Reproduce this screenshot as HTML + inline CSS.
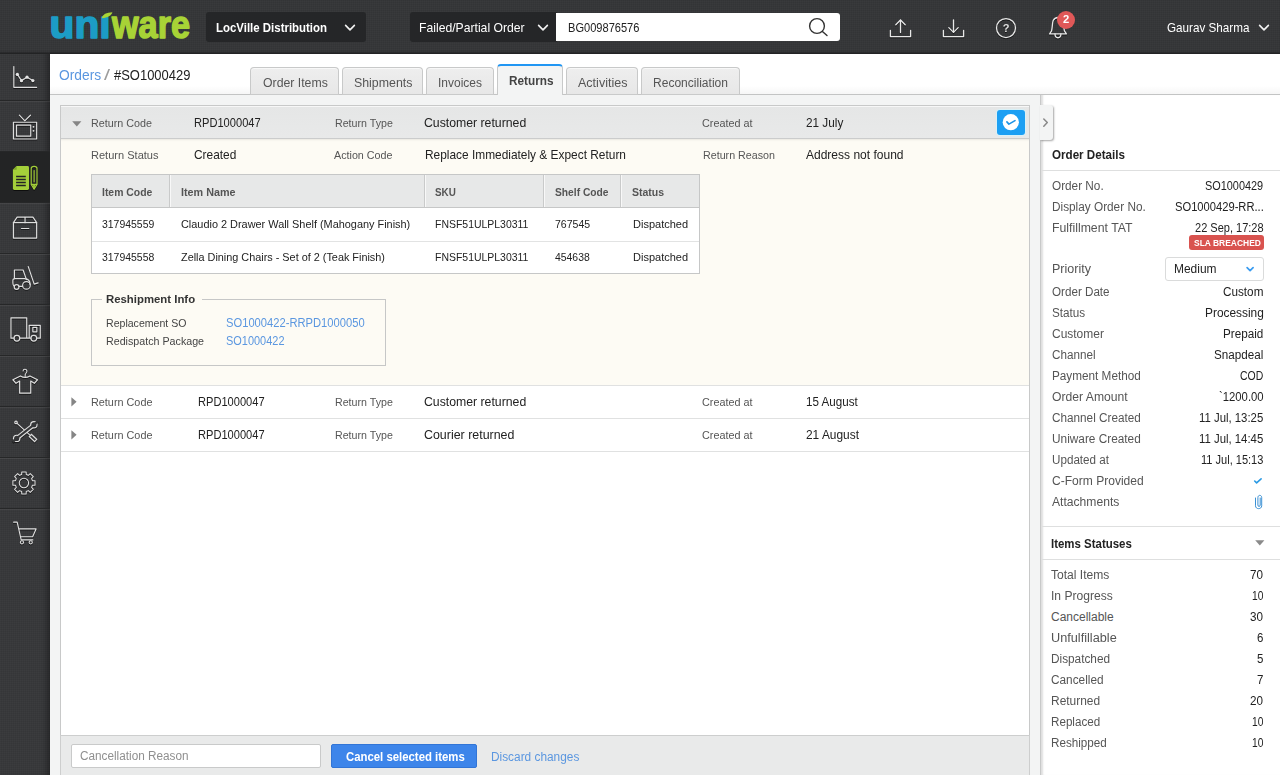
<!DOCTYPE html>
<html lang="en">
<head>
<meta charset="utf-8">
<title>Uniware - Order #SO1000429 - Returns</title>
<style>
*{box-sizing:border-box;margin:0;padding:0}
html,body{width:1280px;height:775px;overflow:hidden}
body{font-family:"Liberation Sans",sans-serif;font-size:12px;color:#222;background:#fff;position:relative}
.abs{position:absolute}
a{color:inherit;text-decoration:none}
.t{position:absolute;white-space:nowrap;line-height:16px;transform-origin:0 50%;color:#222}
.g{position:absolute;left:0;top:0}

/* dark chrome */
.dark{background-color:#353638;
 background-image:
  repeating-linear-gradient(0deg,rgba(255,255,255,.012) 0 1px,rgba(0,0,0,.02) 1px 2px),
  repeating-linear-gradient(90deg,rgba(255,255,255,.012) 0 1px,rgba(0,0,0,.02) 1px 2px);}
#topbar{z-index:5;position:absolute;left:0;top:0;width:1280px;height:54px;box-shadow:inset 0 -1px 0 #222324,inset 0 -3px 2px -1px rgba(0,0,0,.25)}
#sidebar{background-color:#37383a !important;position:absolute;left:0;top:50px;width:50px;height:725px;box-shadow:inset -7px 0 6px -4px rgba(0,0,0,.35)}
.sitem{position:absolute;left:0;width:50px;height:51px;border-bottom:1px solid #262728;box-shadow:inset 0 1px 0 rgba(255,255,255,.07)}
.sitem.active{background:#232425;box-shadow:none}
.sitem.active svg{transform:none}
.sitem svg{position:absolute;left:0;top:0;width:50px;height:50px;transform:scale(.955);transform-origin:25px 27px;fill:none;stroke:#dedede;stroke-width:1.25;stroke-linecap:round;stroke-linejoin:round;filter:drop-shadow(0 1px 0 rgba(0,0,0,.6))}
.sitem:last-child{border-bottom:none}

/* top bar */
.tb-box{position:absolute;top:12px;height:30px;background:#252628;border-radius:3px}
#wh{left:206px;width:160px}
#stype{left:410px;width:147px;border-radius:3px 0 0 3px}
#sinput{position:absolute;left:556px;top:12.5px;width:284px;height:28.3px;background:#fff;border-radius:0 3px 3px 0}
.chev{position:absolute;fill:none;stroke:#f2f2f2;stroke-width:1.6;stroke-linecap:round;stroke-linejoin:round}
.tbi{position:absolute;fill:none;stroke:#e8e8e8;stroke-width:1.3;stroke-linecap:round;stroke-linejoin:round;filter:drop-shadow(0 1px 0 rgba(0,0,0,.6))}
#badge{position:absolute;left:1057px;top:10.5px;width:18px;height:18px;border-radius:9px;background:#e05858}

/* main header */
#mainhead{position:absolute;left:50px;top:54px;width:1230px;height:41px;background:linear-gradient(#fff 0,#fff 80%,#f6f6f6 100%);border-bottom:1px solid #c3c4c4}
.tab{position:absolute;top:67px;height:28px;background:linear-gradient(#eeeeee,#e7e7e7);border:1px solid #c8c9c9;border-bottom-color:#c9caca;border-radius:4px 4px 0 0;box-shadow:inset 0 1px 0 #f8f8f8}
.tab.active{top:64px;height:32px;background:#f3f4f4;border-top:2px solid #2196f3;border-bottom:none;box-shadow:none}

/* content */
#content{position:absolute;left:50px;top:95px;width:990px;height:680px;background:#f3f4f4}
#acc{position:absolute;left:60px;top:105px;width:970px;height:631px;background:#fff;border:1px solid #c8c9c9}
#footer{position:absolute;left:60px;top:735px;width:970px;height:40px;background:#e9eaea;border:1px solid #cdcece;border-bottom:none}
.row{position:absolute;left:61px;width:968px}
.row.head{top:106px;height:33px;background:linear-gradient(#e5e6e6,#e8e9e9);border-bottom:1px solid #cbcccc;box-shadow:inset 0 1px 0 #f7f7f7}
.row.plain{height:33px;border-bottom:1px solid #e0e1e1;background:#fff}
#expanded{position:absolute;left:61px;top:139px;width:968px;height:247px;background:#fdfbf4;box-shadow:inset 0 3px 2px -2px rgba(0,0,0,.08);border-bottom:1px solid #e0e1e1}
.tri{position:absolute;width:0;height:0}
.tri.down{border-left:4.6px solid transparent;border-right:4.6px solid transparent;border-top:5.2px solid #858585}
.tri.right{border-top:4.6px solid transparent;border-bottom:4.6px solid transparent;border-left:5.4px solid #858585}

/* item table */
#tbl{position:absolute;left:91px;top:174px;width:609px;height:100px;border:1px solid #c6c7c7;background:#fff}
#tbl .th{position:absolute;top:0;height:33px;background:#e7e8e8;border-bottom:1px solid #c6c7c7}
#tbl .vs{position:absolute;top:0;width:2px;height:32px;background:#c9caca;border-right:1px solid #f8f8f8}
#tbl .hr{position:absolute;left:0;width:607px;height:1px;background:#e2e3e3}
#reship{position:absolute;left:91px;top:299px;width:295px;height:67px;border:1px solid #c6c7c7}
#reship .lg{position:absolute;left:10px;top:-8px;width:100px;height:16px;background:#fdfbf4}

/* footer */
#creason{position:absolute;left:71px;top:744px;width:250px;height:24px;background:#fff;border:1px solid #c9caca;border-radius:2px}
#cbtn{position:absolute;left:331px;top:744px;width:146px;height:24px;background:#3d85ea;border:1px solid #3275d6;border-radius:2px}

/* right panel */
#rp{position:absolute;left:1040px;top:95px;width:240px;height:680px;background:#fff;border-left:1px solid #c8c9c9;box-shadow:inset 3px 0 2px -1px rgba(0,0,0,.13)}
#handle{position:absolute;left:1040px;top:105px;width:13px;height:35px;background:#f3f4f4;border-radius:0 3px 3px 0;box-shadow:1px 1px 2px rgba(0,0,0,.35)}
.hline{position:absolute;left:1042px;width:238px;height:1px;background:#dedfdf}
#sla{position:absolute;left:1189px;top:235px;width:75px;height:15px;background:#d9534f;border-radius:3px}
#prio{position:absolute;left:1165px;top:256.6px;width:99px;height:24px;background:#fff;border:1px solid #dadbdb;border-radius:3px}
#chk{position:absolute;left:997px;top:110px;width:28px;height:25px;background:#1c9ff3;border-radius:3px;box-shadow:0 0 1px 1px rgba(210,245,255,.7)}
</style>
</head>
<body>

<!-- ============ TOP BAR ============ -->
<div id="topbar" class="dark">
  <svg class="abs" style="left:44px;top:6px" width="156" height="42" viewBox="44 6 156 42" aria-label="uniware">
    
    <text x="49.6" y="38" font-family="Liberation Sans, sans-serif" font-weight="bold" font-size="38" fill="#1c9cc5" stroke="#1c9cc5" stroke-width="1.5" stroke-linejoin="round" textLength="61" lengthAdjust="spacingAndGlyphs">un&#305;</text>
    <text x="111.9" y="38" font-family="Liberation Sans, sans-serif" font-weight="bold" font-size="38" fill="#a8d336" stroke="#a8d336" stroke-width="1.5" stroke-linejoin="round" textLength="78.2" lengthAdjust="spacingAndGlyphs">ware</text>
    <path d="M101.8 18.2 C102.5 14.2 106.5 12.4 112.4 12.2 C111.4 15.6 108 17.6 101.8 18.2 Z" fill="#a9d435"/>
  </svg>
  <div class="tb-box" id="wh"></div>
  <span class="t" style="left:215.9px;top:19.5px;font-size:13px;font-weight:700;color:#fff;transform:scaleX(0.880);">LocVille Distribution</span>
  <svg class="chev" style="left:343px;top:23px" width="14" height="10" viewBox="0 0 14 10"><path d="M2.6 2.4 L7 6.9 L11.4 2.4"/></svg>
  <div class="tb-box" id="stype"></div>
  <span class="t" style="left:418.8px;top:19.5px;font-size:13px;color:#fff;transform:scaleX(0.937);">Failed/Partial Order</span>
  <svg class="chev" style="left:536px;top:23px" width="14" height="10" viewBox="0 0 14 10"><path d="M2.6 2.4 L7 6.9 L11.4 2.4"/></svg>
  <div id="sinput"></div>
  <span class="t" style="left:568.1px;top:19.5px;font-size:13px;color:#222;transform:scaleX(0.852);">BG009876576</span>
  <svg class="abs" style="left:806px;top:15px;fill:none;stroke:#333;stroke-width:1.4;stroke-linecap:round" width="24" height="24" viewBox="0 0 24 24"><circle cx="11" cy="11" r="7.4"/><path d="M16.4 16.4 L21 20.6"/></svg>
  <svg class="tbi" style="left:888px;top:17px" width="26" height="22" viewBox="0 0 26 22"><path d="M2.4 13.5 V19.6 H22.6 V13.5"/><path d="M12.5 15.5 V3.2"/><path d="M7.8 7.8 L12.5 3 L17.2 7.8"/></svg>
  <svg class="tbi" style="left:941px;top:17px" width="26" height="22" viewBox="0 0 26 22"><path d="M2.4 13.5 V19.6 H22.6 V13.5"/><path d="M12.5 3 V15.2"/><path d="M7.8 10.6 L12.5 15.4 L17.2 10.6"/></svg>
  <svg class="tbi" style="left:994px;top:16px" width="24" height="24" viewBox="0 0 24 24"><circle cx="12" cy="12.05" r="9.5"/><text x="12" y="16.1" text-anchor="middle" font-family="Liberation Sans, sans-serif" font-size="11" font-weight="bold" fill="#e0e0e0" stroke="none">?</text></svg>
  <svg class="tbi" style="left:1046px;top:14px" width="24" height="26" viewBox="0 0 24 26"><path d="M3.6 19.9 L5.6 16.8 C6.5 13 6.2 9 7.2 6.6 C8.2 4.3 10 3.5 12 3.5 C14 3.5 15.8 4.3 16.8 6.6 C17.8 9 17.5 13 18.4 16.8 L20.4 19.9 Z"/><path d="M9 20 C9 25 14.9 25 14.9 20"/></svg>
  <div id="badge"></div>
  <span class="t" style="left:1063.2px;top:11.8px;font-size:10px;font-weight:700;color:#fff;transform:scaleX(1.124);">2</span>
  <span class="t" style="left:1167.2px;top:19.5px;font-size:13px;color:#fff;transform:scaleX(0.898);">Gaurav Sharma</span>
  <svg class="chev" style="left:1257px;top:23px" width="14" height="10" viewBox="0 0 14 10"><path d="M2.6 2.4 L7 6.9 L11.4 2.4"/></svg>
</div>

<!-- ============ SIDEBAR ============ -->
<div id="sidebar" class="dark">
  <div class="sitem" style="top:0px"><svg viewBox="0 50 50 50"><path d="M13.3 66 V87.8 H37.2"/><path d="M17 74.3 L21.3 80.8 L27.1 77.2 L33.2 80.7"/><g fill="#e4e4e4" stroke="none"><circle cx="17" cy="74.3" r="1.7"/><circle cx="21.3" cy="80.8" r="1.7"/><circle cx="27.1" cy="77.2" r="1.7"/><circle cx="33.2" cy="80.7" r="1.7"/></g></svg></div>
  <div class="sitem" style="top:51px"><svg viewBox="0 101 50 50"><path d="M19.1 114.6 L24.8 120.5 L30.7 114.6"/><rect x="12.9" y="122" width="24.3" height="17.5"/><rect x="16.1" y="125" width="14.9" height="11.6"/><g fill="#e4e4e4" stroke="none"><circle cx="33.9" cy="126.8" r="1"/><circle cx="33.9" cy="131" r="1"/></g></svg></div>
  <div class="sitem active" style="top:102px"><svg viewBox="0 152 50 50"><g style="filter:none"><path d="M16.6 166 H27.6 Q29 166 29 167.4 V188.6 Q29 190 27.6 190 H14.3 Q12.9 190 12.9 188.6 V169.7 Z" fill="#a4cf3a" stroke="none"/><path d="M12.9 169.7 H16.6 V166 Z" fill="#7fa52a" stroke="none"/><path d="M16.1 176.5 H25.8 M16.1 179.5 H25.8 M16.1 182.6 H25.8 M16.1 185.6 H25.8" stroke="#232425" stroke-width="1.5" stroke-linecap="butt"/><path d="M31.2 168.4 V184.4 L34.1 189.3 L37 184.4 V168.4 Q37 166.3 34.1 166.3 Q31.2 166.3 31.2 168.4 Z M31.2 184.4 H37 M34.1 170.5 V182" stroke="#a4cf3a" stroke-width="1.2"/><path d="M33 184.6 L34.1 189 L35.2 184.6" stroke="#a4cf3a" fill="#a4cf3a" stroke-width=".8"/></g></svg></div>
  <div class="sitem" style="top:153px"><svg viewBox="0 203 50 50"><rect x="12.9" y="222.3" width="24.3" height="16.2"/><path d="M12.9 222.3 L16.8 216.5 H33.3 L37.2 222.3 M25.05 216.5 V222.3 M21.3 228.4 H29"/></svg></div>
  <div class="sitem" style="top:204px"><svg viewBox="0 254 50 50"><path d="M13.9 278.5 V269.5 H23 L26.5 279.6"/><path d="M13.7 286.6 Q12.3 285.6 12.3 283 V280.6 Q12.3 278.5 14.6 278.5 H24.5 Q30.3 279 30.4 284.6 M18.7 286.6 H22.5"/><circle cx="16.2" cy="287.2" r="2.5"/><circle cx="26.5" cy="285.6" r="4"/><path d="M28.4 265.9 L34.6 284.3 L38.7 283"/></svg></div>
  <div class="sitem" style="top:255px"><svg viewBox="0 305 50 50"><path d="M13.5 338.5 H10.3 V317.2 H26.8 V338.5 H19.5 M26.8 338.5 H29.4 M31.2 338.5 H29.4 V325 H41 V338.5 H37.2"/><rect x="33.2" y="327.2" width="4.2" height="4.6"/><circle cx="16.5" cy="338.5" r="3"/><circle cx="34.2" cy="338.5" r="3"/></svg></div>
  <div class="sitem" style="top:306px"><svg viewBox="0 356 50 50"><path d="M19.4 393.7 V381 L15.6 383.3 L12.3 379.6 L20.2 375.6 Q25.2 378.6 30.2 375.6 L38.1 379.6 L34.8 383.3 L31 381 V393.7 Z"/><path d="M25.2 376.3 V374.4 C25.2 372.9 27 372.6 27 370.8 C27 369.3 25.9 368.7 24.9 368.7 C23.8 368.7 23 369.5 23 370.5" stroke-width="1.1"/></svg></div>
  <div class="sitem" style="top:357px"><svg viewBox="0 407 50 50"><path d="M16.4 422.6 L30.5 435.5" stroke-width="1.2"/><circle cx="15.6" cy="421.9" r="1.3"/><path d="M30.2 435.2 L36.6 441.2" stroke-width="4.4" stroke-linecap="butt"/><path d="M31 436 L35.8 440.4" stroke="#353638" stroke-width="2" stroke-linecap="butt"/><path d="M17.5 437.6 L33.5 425" stroke-width="4.6" stroke-linecap="butt"/><circle cx="16.3" cy="438.6" r="3.9" fill="#e4e4e4" stroke="none"/><circle cx="34.3" cy="424.3" r="3.9" fill="#e4e4e4" stroke="none"/><path d="M17.5 437.6 L33.5 425" stroke="#353638" stroke-width="2.2" stroke-linecap="butt"/><circle cx="16.3" cy="438.6" r="2.7" fill="#353638" stroke="none"/><circle cx="34.3" cy="424.3" r="2.7" fill="#353638" stroke="none"/><path d="M16.6 438.4 L12 442.2" stroke="#353638" stroke-width="2.6" stroke-linecap="butt"/><path d="M34 424.5 L38.8 420.5" stroke="#353638" stroke-width="2.6" stroke-linecap="butt"/></svg></div>
  <div class="sitem" style="top:408px"><svg viewBox="0 458 50 50"><path d="M32.8 480.5 L35.5 480.6 L35.5 485.2 L32.8 485.3 L31.9 487.5 L33.7 489.5 L30.5 492.7 L28.5 490.9 L26.3 491.8 L26.2 494.5 L21.6 494.5 L21.5 491.8 L19.3 490.9 L17.3 492.7 L14.1 489.5 L15.9 487.5 L15.0 485.3 L12.3 485.2 L12.3 480.6 L15.0 480.5 L15.9 478.3 L14.1 476.3 L17.3 473.1 L19.3 474.9 L21.5 474.0 L21.6 471.3 L26.2 471.3 L26.3 474.0 L28.5 474.9 L30.5 473.1 L33.7 476.3 L31.9 478.3 Z" stroke-width="1.1"/><circle cx="23.9" cy="482.9" r="4.9" stroke-width="1.1"/></svg></div>
  <div class="sitem" style="top:459px"><svg viewBox="0 509 50 50"><path d="M13.1 521.5 H16.8 L21 540.1 H33.2 M18.5 528.6 H36.6 L33 536.8 H20.3" stroke-width="1.2"/><circle cx="21.8" cy="542.6" r="1.7" stroke-width="1.1"/><circle cx="31" cy="542.6" r="1.7" stroke-width="1.1"/></svg></div>
</div>

<!-- ============ MAIN HEADER / TABS ============ -->
<div id="mainhead"></div>
<div class="g" id="crumb">
  <span class="t" style="left:58.8px;top:67.2px;font-size:14px;color:#5b97e0;transform:scaleX(0.987);"><a>Orders</a></span>
  <span class="t" style="left:103.7px;top:67.2px;font-size:14px;color:#9c9c9c;transform:scaleX(1.555);">/</span>
  <span class="t" style="left:114.1px;top:67.2px;font-size:14px;color:#222;transform:scaleX(0.926);">#SO1000429</span>
</div>
<div class="g" id="tabs">
  <div class="tab" style="left:250px;width:89px"></div><span class="t" style="left:263.0px;top:74.9px;font-size:12.5px;color:#555;transform:scaleX(0.982);">Order Items</span>
  <div class="tab" style="left:342px;width:81px"></div><span class="t" style="left:353.6px;top:74.9px;font-size:12.5px;color:#555;transform:scaleX(0.989);">Shipments</span>
  <div class="tab" style="left:426px;width:68px"></div><span class="t" style="left:438.1px;top:74.9px;font-size:12.5px;color:#555;transform:scaleX(0.958);">Invoices</span>
  <div class="tab active" style="left:497px;width:66px"></div><span class="t" style="left:509.1px;top:72.6px;font-size:12.5px;font-weight:700;color:#444;transform:scaleX(0.941);">Returns</span>
  <div class="tab" style="left:566px;width:72px"></div><span class="t" style="left:577.6px;top:74.9px;font-size:12.5px;color:#555;transform:scaleX(1.002);">Activities</span>
  <div class="tab" style="left:641px;width:99px"></div><span class="t" style="left:653.1px;top:74.9px;font-size:12.5px;color:#555;transform:scaleX(0.963);">Reconciliation</span>
</div>

<!-- ============ CONTENT: RETURNS ACCORDION ============ -->
<div id="content"></div>
<div id="acc"></div>

<div class="g" id="ret1">
  <div class="row head"></div>
  <svg class="abs" style="left:71.5px;top:120.9px" width="10" height="6" viewBox="0 0 10 6"><polygon points="0.2,0.2 9.4,0.2 4.8,5.4" fill="#858585"/></svg>
  <span class="t" style="left:91.0px;top:115.3px;font-size:11px;color:#555;transform:scaleX(0.978);">Return Code</span>
  <span class="t" style="left:193.7px;top:114.7px;font-size:13px;color:#222;transform:scaleX(0.854);">RPD1000047</span>
  <span class="t" style="left:335.1px;top:115.3px;font-size:11px;color:#555;transform:scaleX(0.968);">Return Type</span>
  <span class="t" style="left:423.8px;top:114.7px;font-size:13px;color:#222;transform:scaleX(0.943);">Customer returned</span>
  <span class="t" style="left:702.3px;top:115.3px;font-size:11px;color:#555;transform:scaleX(0.983);">Created at</span>
  <span class="t" style="left:805.6px;top:114.7px;font-size:13px;color:#222;transform:scaleX(0.905);">21 July</span>
  <div id="chk"><svg width="28" height="25" viewBox="0 0 28 25"><circle cx="13.8" cy="12.2" r="8.1" fill="#fff"/><path d="M9.9 11.9 L11.9 14.1 L18 10.6" fill="none" stroke="#1b93e6" stroke-width="1.6" stroke-linecap="round" stroke-linejoin="round"/></svg></div>

  <div id="expanded"></div>
  <span class="t" style="left:91.0px;top:147.3px;font-size:11px;color:#555;transform:scaleX(1.004);">Return Status</span>
  <span class="t" style="left:193.7px;top:146.7px;font-size:13px;color:#222;transform:scaleX(0.914);">Created</span>
  <span class="t" style="left:333.9px;top:147.3px;font-size:11px;color:#555;transform:scaleX(0.976);">Action Code</span>
  <span class="t" style="left:425.0px;top:146.7px;font-size:13px;color:#222;transform:scaleX(0.915);">Replace Immediately &amp; Expect Return</span>
  <span class="t" style="left:702.8px;top:147.3px;font-size:11px;color:#555;transform:scaleX(0.973);">Return Reason</span>
  <span class="t" style="left:806.2px;top:146.7px;font-size:13px;color:#222;transform:scaleX(0.924);">Address not found</span>

  <div id="tbl">
    <div class="th" style="left:0;width:607px"></div>
    <div class="vs" style="left:77px"></div>
    <div class="vs" style="left:332px"></div>
    <div class="vs" style="left:451px"></div>
    <div class="vs" style="left:528px"></div>
    <div class="hr" style="top:66px"></div>
  </div>
  <span class="t" style="left:101.6px;top:184.4px;font-size:11px;font-weight:700;color:#555;transform:scaleX(0.946);">Item Code</span>
  <span class="t" style="left:180.9px;top:184.4px;font-size:11px;font-weight:700;color:#555;transform:scaleX(0.980);">Item Name</span>
  <span class="t" style="left:435.1px;top:184.4px;font-size:11px;font-weight:700;color:#555;transform:scaleX(0.896);">SKU</span>
  <span class="t" style="left:554.7px;top:184.4px;font-size:11px;font-weight:700;color:#555;transform:scaleX(0.932);">Shelf Code</span>
  <span class="t" style="left:631.6px;top:184.4px;font-size:11px;font-weight:700;color:#555;transform:scaleX(0.955);">Status</span>

  <span class="t" style="left:102.1px;top:216.4px;font-size:11px;color:#222;transform:scaleX(0.950);">317945559</span>
  <span class="t" style="left:180.9px;top:216.4px;font-size:11px;color:#222;transform:scaleX(0.991);">Claudio 2 Drawer Wall Shelf (Mahogany Finish)</span>
  <span class="t" style="left:435.1px;top:216.4px;font-size:11px;color:#222;transform:scaleX(0.951);">FNSF51ULPL30311</span>
  <span class="t" style="left:555.1px;top:216.4px;font-size:11px;color:#222;transform:scaleX(0.957);">767545</span>
  <span class="t" style="left:632.8px;top:216.4px;font-size:11px;color:#222;transform:scaleX(1.001);">Dispatched</span>

  <span class="t" style="left:102.1px;top:249.4px;font-size:11px;color:#222;transform:scaleX(0.950);">317945558</span>
  <span class="t" style="left:180.9px;top:249.4px;font-size:11px;color:#222;transform:scaleX(0.987);">Zella Dining Chairs - Set of 2 (Teak Finish)</span>
  <span class="t" style="left:435.1px;top:249.4px;font-size:11px;color:#222;transform:scaleX(0.951);">FNSF51ULPL30311</span>
  <span class="t" style="left:555.1px;top:249.4px;font-size:11px;color:#222;transform:scaleX(0.946);">454638</span>
  <span class="t" style="left:632.8px;top:249.4px;font-size:11px;color:#222;transform:scaleX(1.001);">Dispatched</span>

  <div id="reship"><div class="lg"></div></div>
  <span class="t" style="left:105.8px;top:291.4px;font-size:11px;font-weight:700;color:#333;transform:scaleX(1.034);">Reshipment Info</span>
  <span class="t" style="left:105.8px;top:315.0px;font-size:11px;color:#444;transform:scaleX(0.961);">Replacement SO</span>
  <span class="t" style="left:226.4px;top:315.0px;font-size:12px;color:#5b97e0;transform:scaleX(0.932);"><a>SO1000422-RRPD1000050</a></span>
  <span class="t" style="left:105.8px;top:333.4px;font-size:11px;color:#444;transform:scaleX(0.972);">Redispatch Package</span>
  <span class="t" style="left:226.4px;top:333.4px;font-size:12px;color:#5b97e0;transform:scaleX(0.913);"><a>SO1000422</a></span>
</div>

<div class="g" id="ret2">
  <div class="row plain" style="top:386px"></div>
  <svg class="abs" style="left:70.5px;top:397.2px" width="6" height="10" viewBox="0 0 6 10"><polygon points="0.4,0.2 5.6,4.8 0.4,9.4" fill="#858585"/></svg>
  <span class="t" style="left:90.6px;top:394.3px;font-size:11px;color:#555;transform:scaleX(0.985);">Return Code</span>
  <span class="t" style="left:197.9px;top:393.7px;font-size:13px;color:#222;transform:scaleX(0.853);">RPD1000047</span>
  <span class="t" style="left:335.1px;top:394.3px;font-size:11px;color:#555;transform:scaleX(0.968);">Return Type</span>
  <span class="t" style="left:423.8px;top:393.7px;font-size:13px;color:#222;transform:scaleX(0.943);">Customer returned</span>
  <span class="t" style="left:702.3px;top:394.3px;font-size:11px;color:#555;transform:scaleX(0.983);">Created at</span>
  <span class="t" style="left:806.1px;top:393.7px;font-size:13px;color:#222;transform:scaleX(0.895);">15 August</span>
</div>
<div class="g" id="ret3">
  <div class="row plain" style="top:419px"></div>
  <svg class="abs" style="left:70.5px;top:430.2px" width="6" height="10" viewBox="0 0 6 10"><polygon points="0.4,0.2 5.6,4.8 0.4,9.4" fill="#858585"/></svg>
  <span class="t" style="left:90.6px;top:427.3px;font-size:11px;color:#555;transform:scaleX(0.985);">Return Code</span>
  <span class="t" style="left:197.9px;top:426.7px;font-size:13px;color:#222;transform:scaleX(0.853);">RPD1000047</span>
  <span class="t" style="left:335.1px;top:427.3px;font-size:11px;color:#555;transform:scaleX(0.968);">Return Type</span>
  <span class="t" style="left:423.8px;top:426.7px;font-size:13px;color:#222;transform:scaleX(0.955);">Courier returned</span>
  <span class="t" style="left:702.3px;top:427.3px;font-size:11px;color:#555;transform:scaleX(0.983);">Created at</span>
  <span class="t" style="left:806.1px;top:426.7px;font-size:13px;color:#222;transform:scaleX(0.916);">21 August</span>
</div>

<!-- ============ FOOTER ACTIONS ============ -->
<div id="footer"></div>
<div class="g" id="actions">
  <div id="creason"></div>
  <span class="t" style="left:80.1px;top:748.4px;font-size:12px;color:#8f8f8f;transform:scaleX(0.980);">Cancellation Reason</span>
  <div id="cbtn"></div>
  <span class="t" style="left:345.7px;top:748.8px;font-size:12px;font-weight:700;color:#fff;transform:scaleX(0.947);">Cancel selected items</span>
  <span class="t" style="left:490.9px;top:749.1px;font-size:12px;color:#5b97e0;transform:scaleX(0.988);"><a>Discard changes</a></span>
</div>

<!-- ============ RIGHT PANEL ============ -->
<div id="rp"></div>
<div id="handle"><svg width="13" height="36" viewBox="0 0 13 36"><path d="M3.8 14 L7.3 17.6 L3.8 21.2" fill="none" stroke="#888" stroke-width="1.5" stroke-linecap="round" stroke-linejoin="round"/></svg></div>

<div class="g" id="orderdetails">
  <span class="t" style="left:1052.2px;top:146.8px;font-size:12px;font-weight:700;color:#222;transform:scaleX(0.968);">Order Details</span>
  <div class="hline" style="top:170px"></div>
  <span class="t" style="left:1052.2px;top:178.0px;font-size:12px;color:#555;transform:scaleX(0.981);">Order No.</span><span class="t" style="left:1205.4px;top:178.0px;font-size:12px;color:#222;transform:scaleX(0.908);">SO1000429</span>
  <span class="t" style="left:1052.2px;top:199.1px;font-size:12px;color:#555;transform:scaleX(0.983);">Display Order No.</span><span class="t" style="left:1174.8px;top:199.1px;font-size:12px;color:#222;transform:scaleX(0.931);">SO1000429-RR...</span>
  <span class="t" style="left:1052.2px;top:220.1px;font-size:12px;color:#555;transform:scaleX(1.023);">Fulfillment TAT</span><span class="t" style="left:1195.0px;top:220.1px;font-size:12px;color:#222;transform:scaleX(0.918);">22 Sep, 17:28</span>
  <div id="sla"></div><span class="t" style="left:1193.5px;top:234.7px;font-size:9px;font-weight:700;color:#fff;transform:scaleX(0.940);">SLA BREACHED</span>
  <span class="t" style="left:1052.2px;top:261.1px;font-size:12px;color:#555;transform:scaleX(1.042);">Priority</span>
  <div id="prio"></div><span class="t" style="left:1173.9px;top:261.1px;font-size:12px;color:#222;transform:scaleX(0.996);">Medium</span>
  <svg class="abs" style="left:1244px;top:264px" width="12" height="10" viewBox="0 0 12 10"><path d="M3.1 3.7 L6.1 6.7 L9.1 3.7" fill="none" stroke="#3a9cf0" stroke-width="1.7" stroke-linecap="round" stroke-linejoin="round"/></svg>
  <span class="t" style="left:1052.2px;top:283.9px;font-size:12px;color:#555;transform:scaleX(0.970);">Order Date</span><span class="t" style="left:1223.2px;top:283.9px;font-size:12px;color:#222;transform:scaleX(0.977);">Custom</span>
  <span class="t" style="left:1052.2px;top:304.9px;font-size:12px;color:#555;transform:scaleX(0.976);">Status</span><span class="t" style="left:1204.8px;top:304.9px;font-size:12px;color:#222;transform:scaleX(0.990);">Processing</span>
  <span class="t" style="left:1052.2px;top:325.9px;font-size:12px;color:#555;transform:scaleX(0.998);">Customer</span><span class="t" style="left:1223.2px;top:325.9px;font-size:12px;color:#222;transform:scaleX(0.976);">Prepaid</span>
  <span class="t" style="left:1052.2px;top:346.9px;font-size:12px;color:#555;transform:scaleX(0.975);">Channel</span><span class="t" style="left:1214.3px;top:346.9px;font-size:12px;color:#222;transform:scaleX(0.972);">Snapdeal</span>
  <span class="t" style="left:1052.2px;top:367.9px;font-size:12px;color:#555;transform:scaleX(0.979);">Payment Method</span><span class="t" style="left:1240.4px;top:367.9px;font-size:12px;color:#222;transform:scaleX(0.870);">COD</span>
  <span class="t" style="left:1052.2px;top:388.9px;font-size:12px;color:#555;transform:scaleX(1.013);">Order Amount</span><span class="t" style="left:1219.0px;top:388.9px;font-size:12px;color:#222;transform:scaleX(0.941);">`1200.00</span>
  <span class="t" style="left:1052.2px;top:409.9px;font-size:12px;color:#555;transform:scaleX(0.979);">Channel Created</span><span class="t" style="left:1199.4px;top:409.9px;font-size:12px;color:#222;transform:scaleX(0.947);">11 Jul, 13:25</span>
  <span class="t" style="left:1052.2px;top:430.9px;font-size:12px;color:#555;transform:scaleX(0.986);">Uniware Created</span><span class="t" style="left:1199.4px;top:430.9px;font-size:12px;color:#222;transform:scaleX(0.947);">11 Jul, 14:45</span>
  <span class="t" style="left:1052.2px;top:451.9px;font-size:12px;color:#555;transform:scaleX(0.971);">Updated at</span><span class="t" style="left:1201.2px;top:451.9px;font-size:12px;color:#222;transform:scaleX(0.920);">11 Jul, 15:13</span>
  <span class="t" style="left:1052.2px;top:472.9px;font-size:12px;color:#555;transform:scaleX(1.004);">C-Form Provided</span>
  <svg class="abs" style="left:1251px;top:475px" width="14" height="12" viewBox="0 0 14 12"><path d="M3.7 6 L5.6 7.9 L10.1 3.9" fill="none" stroke="#2a9ae4" stroke-width="1.6" stroke-linecap="round" stroke-linejoin="round"/></svg>
  <span class="t" style="left:1052.2px;top:493.9px;font-size:12px;color:#555;transform:scaleX(1.010);">Attachments</span>
  <svg class="abs" style="left:1252px;top:493px" width="12" height="18" viewBox="0 0 12 18"><path d="M3.5 5 V12.8 C3.5 16.6 9.7 16.6 9.7 12.8 V4.6 C9.7 1.6 5.9 1.6 5.9 4.6 V12 C5.9 14 8.2 14 8.2 12 V5" fill="none" stroke="#3a90d4" stroke-width="1" stroke-linecap="round"/></svg>
  <div class="hline" style="top:526px"></div>
</div>

<div class="g" id="itemstatuses">
  <span class="t" style="left:1051.0px;top:535.8px;font-size:12px;font-weight:700;color:#222;transform:scaleX(0.954);">Items Statuses</span>
  <svg class="abs" style="left:1254.6px;top:540.4px" width="10" height="6" viewBox="0 0 10 6"><polygon points="0.2,0.2 9.4,0.2 4.8,5.4" fill="#8a8a8a"/></svg>
  <div class="hline" style="top:559px"></div>
  <span class="t" style="left:1051.0px;top:566.6px;font-size:12px;color:#555;transform:scaleX(1.006);">Total Items</span><span class="t" style="left:1250.0px;top:566.6px;font-size:12px;color:#222;transform:scaleX(0.973);">70</span>
  <span class="t" style="left:1051.0px;top:587.6px;font-size:12px;color:#555;transform:scaleX(1.006);">In Progress</span><span class="t" style="left:1251.6px;top:587.6px;font-size:12px;color:#222;transform:scaleX(0.853);">10</span>
  <span class="t" style="left:1051.0px;top:608.6px;font-size:12px;color:#555;transform:scaleX(1.000);">Cancellable</span><span class="t" style="left:1250.0px;top:608.6px;font-size:12px;color:#222;transform:scaleX(0.973);">30</span>
  <span class="t" style="left:1051.0px;top:629.6px;font-size:12px;color:#555;transform:scaleX(1.059);">Unfulfillable</span><span class="t" style="left:1256.6px;top:629.6px;font-size:12px;color:#222;transform:scaleX(0.957);">6</span>
  <span class="t" style="left:1051.0px;top:650.6px;font-size:12px;color:#555;transform:scaleX(0.984);">Dispatched</span><span class="t" style="left:1256.6px;top:650.6px;font-size:12px;color:#222;transform:scaleX(0.957);">5</span>
  <span class="t" style="left:1051.0px;top:671.6px;font-size:12px;color:#555;transform:scaleX(0.984);">Cancelled</span><span class="t" style="left:1256.6px;top:671.6px;font-size:12px;color:#222;transform:scaleX(0.957);">7</span>
  <span class="t" style="left:1051.0px;top:692.6px;font-size:12px;color:#555;transform:scaleX(0.996);">Returned</span><span class="t" style="left:1250.0px;top:692.6px;font-size:12px;color:#222;transform:scaleX(0.973);">20</span>
  <span class="t" style="left:1051.0px;top:713.6px;font-size:12px;color:#555;transform:scaleX(0.970);">Replaced</span><span class="t" style="left:1251.6px;top:713.6px;font-size:12px;color:#222;transform:scaleX(0.853);">10</span>
  <span class="t" style="left:1051.0px;top:734.6px;font-size:12px;color:#555;transform:scaleX(0.973);">Reshipped</span><span class="t" style="left:1251.6px;top:734.6px;font-size:12px;color:#222;transform:scaleX(0.853);">10</span>
</div>

</body>
</html>
